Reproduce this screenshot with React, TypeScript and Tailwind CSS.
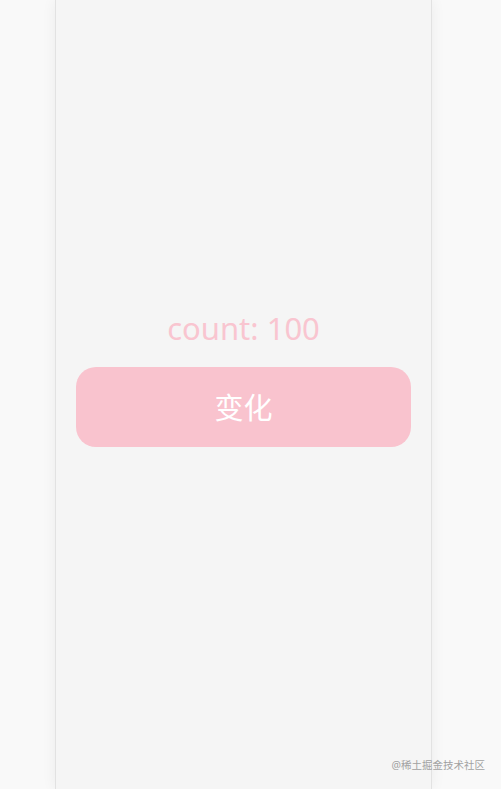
export default function App() {
  return (
    <div className="relative h-[789px] w-[501px] overflow-hidden bg-[#f9f9f9] font-['Noto_Sans','Noto_Sans_CJK_SC',sans-serif]">
      <div className="ml-[55px] flex h-full w-[377px] flex-col border-x border-[#e2e2e2] bg-[#f5f5f5] px-5 pt-[307px] shadow-[0_0_14px_rgba(0,0,0,0.06)]">
        <p className="text-center text-[31px] leading-[42px] text-[#f9c5d0]">count: 100</p>
        <button className="mt-[18px] flex h-20 w-full items-center justify-center rounded-[20px] bg-[#f9c3ce] pt-[2px] text-[29px] text-white">
          变化
        </button>
      </div>
      <span className="absolute bottom-[15px] right-[16px] text-[10.5px] text-[#a2a2a2]">@稀土掘金技术社区</span>
    </div>
  );
}
